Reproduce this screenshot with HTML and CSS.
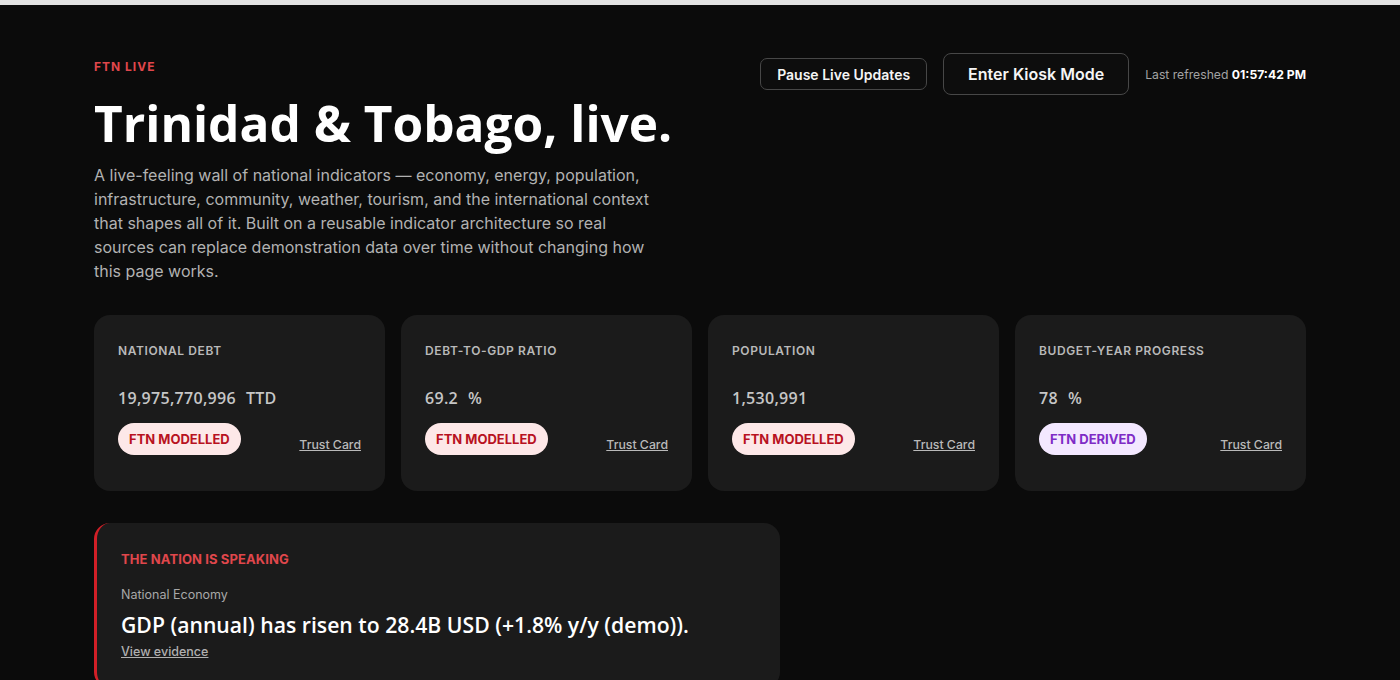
FILE: index.html
```html
<!DOCTYPE html>
<html lang="en">
<head>
<meta charset="utf-8">
<title>FTN Live — Trinidad &amp; Tobago</title>
<link rel="stylesheet" href="styles.css">
</head>
<body>
<div class="topline"></div>
<main class="page">
  <header class="hero">
    <div class="hero-text">
      <div class="eyebrow">FTN LIVE</div>
      <h1 class="title">Trinidad &amp; Tobago, live.</h1>
      <p class="lede">A live-feeling wall of national indicators — economy, energy, population, infrastructure, community, weather, tourism, and the international context that shapes all of it. Built on a reusable indicator architecture so real sources can replace demonstration data over time without changing how this page works.</p>
    </div>
    <div class="hero-actions">
      <button class="btn btn-sm" type="button">Pause Live Updates</button>
      <button class="btn btn-lg" type="button">Enter Kiosk Mode</button>
      <span class="refreshed">Last refreshed <strong>01:57:42 PM</strong></span>
    </div>
  </header>

  <section class="cards">
    <article class="card">
      <h2 class="card-title">NATIONAL DEBT</h2>
      <div class="card-value">19,975,770,996<span class="unit">TTD</span></div>
      <div class="card-foot">
        <span class="badge badge-model">FTN MODELLED</span>
        <a class="trust" href="#">Trust Card</a>
      </div>
    </article>
    <article class="card">
      <h2 class="card-title">DEBT-TO-GDP RATIO</h2>
      <div class="card-value">69.2<span class="unit">%</span></div>
      <div class="card-foot">
        <span class="badge badge-model">FTN MODELLED</span>
        <a class="trust" href="#">Trust Card</a>
      </div>
    </article>
    <article class="card">
      <h2 class="card-title">POPULATION</h2>
      <div class="card-value">1,530,991</div>
      <div class="card-foot">
        <span class="badge badge-model">FTN MODELLED</span>
        <a class="trust" href="#">Trust Card</a>
      </div>
    </article>
    <article class="card">
      <h2 class="card-title">BUDGET-YEAR PROGRESS</h2>
      <div class="card-value">78<span class="unit">%</span></div>
      <div class="card-foot">
        <span class="badge badge-derived">FTN DERIVED</span>
        <a class="trust" href="#">Trust Card</a>
      </div>
    </article>
  </section>

  <section class="speaking">
    <div class="speaking-label">THE NATION IS SPEAKING</div>
    <div class="speaking-topic">National Economy</div>
    <p class="speaking-line">GDP (annual) has risen to 28.4B USD (+1.8% y/y (demo)).</p>
    <a class="evidence" href="#">View evidence</a>
  </section>
</main>
</body>
</html>
```

FILE: styles.css
```css
* { box-sizing: border-box; }

html, body {
  margin: 0;
  padding: 0;
  background: #0b0b0b;
  color: #f2f2f2;
  font-family: Inter, "Liberation Sans", sans-serif;
}

.topline {
  height: 5px;
  background: #e3e3e3;
}

.page {
  width: 1212px;
  margin: 0 auto;
  padding-top: 48px;
  padding-bottom: 60px;
}

/* Hero */
.hero {
  display: flex;
  justify-content: space-between;
  align-items: flex-start;
}

.hero-text { width: 600px; }

.eyebrow {
  margin-top: 6px;
  font-size: 12px;
  line-height: 16px;
  font-weight: 700;
  letter-spacing: 1px;
  color: #e0474c;
}

.title {
  margin: 16px 0 0;
  font-family: "Open Sans", "DejaVu Sans", sans-serif;
  font-size: 49.6px;
  line-height: 64px;
  font-weight: 700;
  letter-spacing: 0;
  color: #ffffff;
  white-space: nowrap;
}

.lede {
  margin: 8px 0 0;
  width: 570px;
  font-size: 16px;
  line-height: 24px;
  color: #b2b2b2;
}

.hero-actions {
  display: flex;
  align-items: center;
  gap: 16px;
}

.btn {
  background: #0d0d0d;
  color: #f5f5f5;
  border: 1px solid #474747;
  font-family: Inter, "Liberation Sans", sans-serif;
  font-weight: 600;
  cursor: pointer;
}

.btn-sm {
  height: 32px;
  padding: 0 16px;
  border-radius: 7px;
  font-size: 14px;
}

.btn-lg {
  height: 42px;
  padding: 0 24px;
  border-radius: 8px;
  font-size: 16px;
}

.refreshed {
  font-size: 12.2px;
  color: #a3a3a3;
}

.refreshed strong {
  color: #ffffff;
  font-weight: 700;
}

/* Indicator cards */
.cards {
  margin-top: 32px;
  display: grid;
  grid-template-columns: repeat(4, 1fr);
  gap: 16px;
}

.card {
  background: #1b1b1b;
  border-radius: 16px;
  padding: 28px 24px 36px;
  height: 176px;
}

.card-title {
  margin: 0;
  font-size: 12px;
  line-height: 16px;
  font-weight: 600;
  letter-spacing: 0.6px;
  color: #b9b9b9;
}

.card-value {
  margin-top: 29px;
  font-family: "Open Sans", "DejaVu Sans", sans-serif;
  font-size: 16px;
  line-height: 20px;
  font-weight: 600;
  letter-spacing: 0.3px;
  color: #c6c6c6;
}

.unit { margin-left: 10px; }

.card-foot {
  margin-top: 15px;
  display: flex;
  justify-content: space-between;
  align-items: flex-end;
}

.badge {
  display: inline-flex;
  align-items: center;
  height: 32px;
  padding: 0 11px;
  border-radius: 16px;
  font-size: 13px;
  font-weight: 700;
  letter-spacing: 0;
}

.badge-model {
  background: #fde8e8;
  color: #b8121f;
}

.badge-derived {
  background: #f3e8ff;
  color: #7e2bc6;
}

.trust {
  margin-bottom: 2px;
  font-size: 12.3px;
  line-height: 16px;
  font-weight: 500;
  color: #b9b9b9;
  text-decoration: underline;
}

/* Headline strip */
.speaking {
  margin-top: 32px;
  width: 686px;
  background: #1b1b1b;
  border-left: 3px solid #d21f27;
  border-radius: 16px;
  padding: 28px 24px 28px;
}

.speaking-label {
  font-size: 13px;
  line-height: 16px;
  font-weight: 700;
  letter-spacing: 0.1px;
  color: #e0474c;
}

.speaking-topic {
  margin-top: 20px;
  font-size: 12.5px;
  line-height: 16px;
  color: #a8a8a8;
}

.speaking-line {
  margin: 8px 0 0;
  font-family: "Open Sans", "DejaVu Sans", sans-serif;
  font-size: 21.2px;
  line-height: 28px;
  font-weight: 600;
  color: #ffffff;
}

.evidence {
  display: inline-block;
  margin-top: 5px;
  font-size: 12.5px;
  line-height: 16px;
  font-weight: 500;
  color: #b0b0b0;
  text-decoration: underline;
}
```
